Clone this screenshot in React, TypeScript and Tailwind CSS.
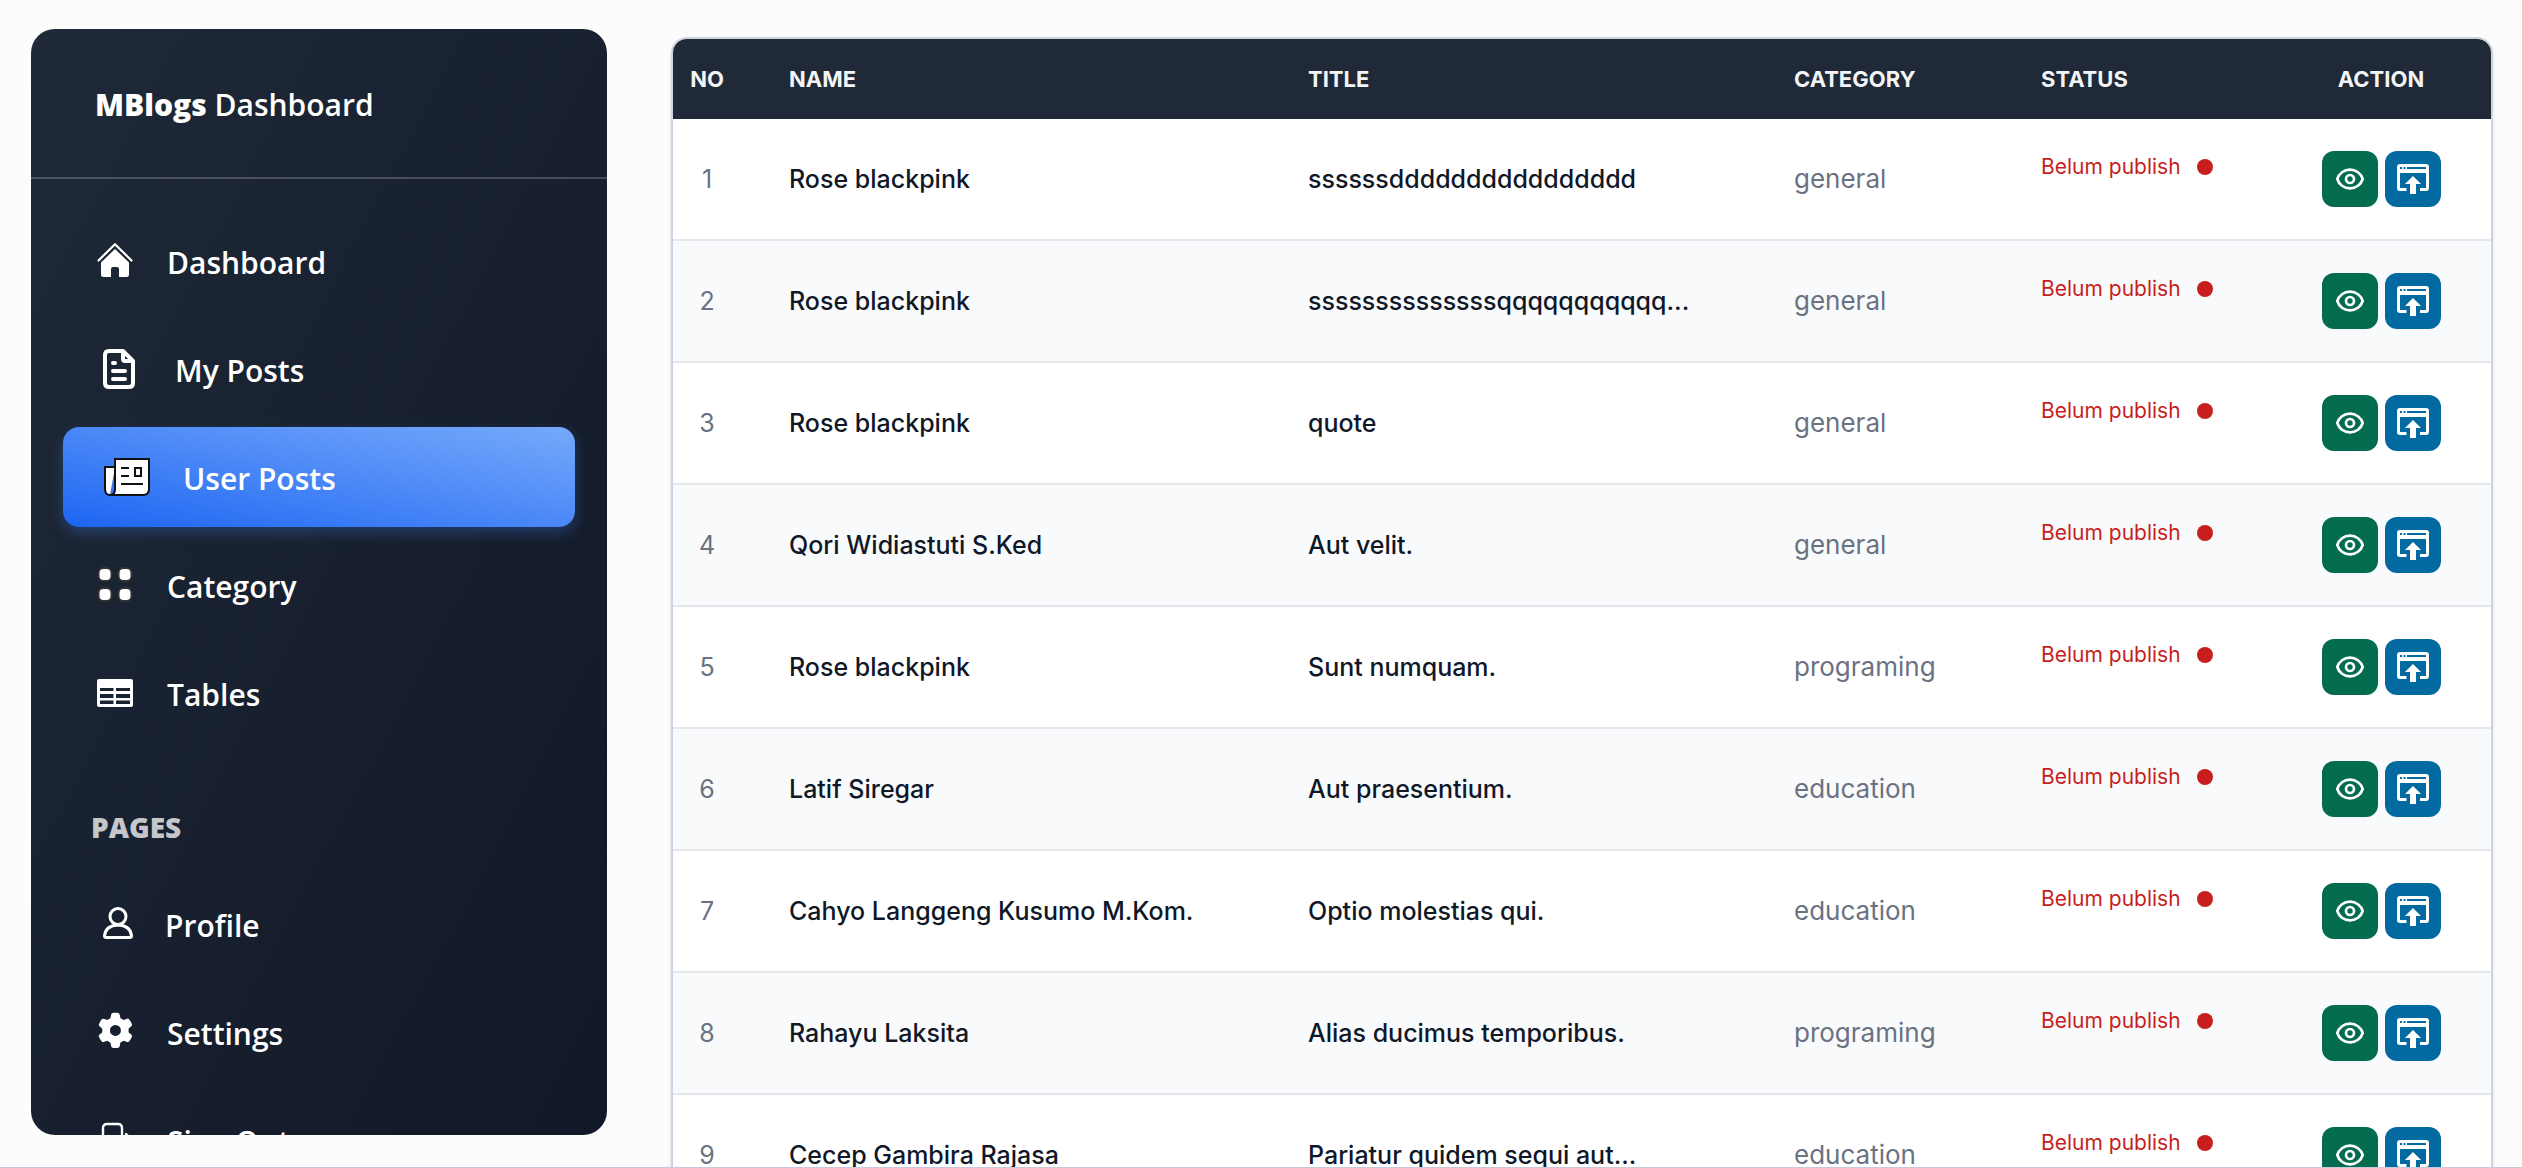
import type { ReactNode } from "react";

const strokeProps = {
  fill: "none",
  stroke: "currentColor",
  strokeLinecap: "round" as const,
  strokeLinejoin: "round" as const,
};

function HomeIcon() {
  return (
    <svg className="h-10 w-10 shrink-0" viewBox="0 0 40 40" fill="currentColor" aria-hidden="true">
      <path d="M3.500 19.500L20 3.200L36.500 19.500" {...strokeProps} strokeWidth="2.200" />
      <path d="M20 8L34 21.500V33.500Q34 36 31.500 36H24V28Q24 26 22 26H18Q16 26 16 28V36H8.500Q6 36 6 33.500V21.500Z" />
    </svg>
  );
}

function DocumentIcon() {
  return (
    <svg className="h-12 w-12 shrink-0" viewBox="0 0 48 48" {...strokeProps} aria-hidden="true">
      <path d="M28 6H14Q10 6 10 10V38Q10 42 14 42H34Q38 42 38 38V16L28 6V14Q28 16 30 16H38" strokeWidth="4" />
      <path d="M18 18H20M18 26H30M18 34H30" strokeWidth="4" />
    </svg>
  );
}

function NewsIcon() {
  return (
    <svg className="h-14 w-14 shrink-0" viewBox="0 0 56 56" fill="#fff" stroke="#111" strokeWidth="2" aria-hidden="true">
      <path d="M20 18H10V40Q10 46 15 46H48Q54 46 54 40V10H20V40Q20 46 15 46" />
      <path d="M26 19H34M26 27H34M26 35H48" fill="none" />
      <path d="M40 19H46V27H40Z" />
    </svg>
  );
}

function CategoryIcon() {
  return (
    <svg className="h-10 w-10 shrink-0" viewBox="0 0 40 40" fill="#fff" stroke="#333" strokeWidth="2" aria-hidden="true">
      <rect x="3.500" y="3" width="13" height="13" rx="5" />
      <rect x="23.500" y="3" width="13" height="13" rx="5" />
      <rect x="3.500" y="23" width="13" height="13" rx="5" />
      <rect x="23.500" y="23" width="13" height="13" rx="5" />
    </svg>
  );
}

function TableIcon() {
  return (
    <svg className="h-10 w-10 shrink-0" viewBox="0 0 40 40" fill="currentColor" fillRule="evenodd" aria-hidden="true">
      <path d="M4 6H36Q38 6 38 8V32Q38 34 36 34H4Q2 34 2 32V8Q2 6 4 6ZM5 15V18H18.500V15ZM21 15V18H35V15ZM5 21V25H18.500V21ZM21 21V25H35V21ZM5 27.500V31H18.500V27.500ZM21 27.500V31H35V27.500Z" />
    </svg>
  );
}

function ProfileIcon() {
  return (
    <svg className="h-10 w-[38px] shrink-0" viewBox="0 0 38 40" {...strokeProps} strokeWidth="3" aria-hidden="true">
      <circle cx="23" cy="12.500" r="8" />
      <path d="M11.500 33.500Q9.500 33.500 9.500 32Q10.500 21.500 23 21Q35.500 21.500 36.500 32Q36.500 33.500 34.500 33.500Z" />
    </svg>
  );
}

function GearIcon() {
  return (
    <svg className="h-10 w-10 shrink-0" viewBox="0 0 512 512" fill="currentColor" aria-hidden="true">
      <path
        transform="translate(36 10) scale(0.88)"
        d="M495.900 166.600c3.200 8.700.5 18.400-6.400 24.600l-43.300 39.400c1.100 8.300 1.700 16.800 1.700 25.400s-.6 17.100-1.700 25.400l43.300 39.400c6.900 6.200 9.600 15.900 6.400 24.600-4.400 11.900-9.700 23.300-15.800 34.300l-4.700 8.100c-6.600 11-14 21.400-22.100 31.200-5.900 7.200-15.700 9.600-24.500 6.800l-55.700-17.700c-13.400 10.300-28.200 18.900-44 25.400l-12.500 57.100c-2 9.100-9 16.300-18.200 17.800-13.800 2.300-28 3.500-42.500 3.500s-28.700-1.200-42.500-3.500c-9.200-1.500-16.200-8.700-18.200-17.800l-12.500-57.100c-15.800-6.500-30.600-15.100-44-25.400l-55.600 17.800c-8.800 2.800-18.600.3-24.500-6.800-8.100-9.800-15.500-20.200-22.100-31.200l-4.700-8.100c-6.100-11-11.400-22.400-15.800-34.300-3.200-8.700-.5-18.400 6.400-24.600l43.300-39.400C64.600 273.100 64 264.600 64 256s.6-17.100 1.700-25.400l-43.300-39.400c-6.900-6.200-9.600-15.900-6.400-24.600 4.400-11.900 9.700-23.300 15.800-34.300l4.700-8.100c6.600-11 14-21.400 22.100-31.200 5.900-7.200 15.700-9.600 24.500-6.800l55.700 17.700c13.400-10.300 28.200-18.900 44-25.400l12.500-57.100c2-9.100 9-16.300 18.200-17.800C227.300 1.200 241.500 0 256 0s28.700 1.200 42.500 3.500c9.200 1.500 16.200 8.700 18.200 17.800l12.500 57.100c15.800 6.500 30.600 15.100 44 25.400l55.700-17.700c8.800-2.800 18.600-.3 24.500 6.800 8.100 9.800 15.500 20.200 22.100 31.200l4.700 8.100c6.100 11 11.400 22.400 15.800 34.300zM256 336a80 80 0 1 0 0-160 80 80 0 1 0 0 160z"
      />
    </svg>
  );
}

function SignOutIcon() {
  return (
    <svg className="h-10 w-10 shrink-0" viewBox="0 0 40 40" {...strokeProps} strokeWidth="2.400" aria-hidden="true">
      <path d="M27 14V8Q27 4 23 4H12Q8 4 8 8V32Q8 36 12 36H23Q27 36 27 32V26M17 20H36M31 14L37 20L31 26" />
    </svg>
  );
}

function EyeIcon() {
  return (
    <svg className="h-8 w-8" viewBox="0 0 24 24" {...strokeProps} strokeWidth="2" aria-hidden="true">
      <path d="M15 12a3 3 0 11-6 0 3 3 0 016 0z" />
      <path d="M2.458 12C3.732 7.943 7.523 5 12 5c4.478 0 8.268 2.943 9.542 7-1.274 4.057-5.064 7-9.542 7-4.477 0-8.268-2.943-9.542-7z" />
    </svg>
  );
}

function PublishIcon() {
  return (
    <svg className="h-8 w-8" viewBox="0 0 32 32" fill="currentColor" fillRule="evenodd" aria-hidden="true">
      <path d="M3 1H29Q32 1 32 4V25Q32 28 29 28H23V25H29V10H3V25H9.500V28H3Q0 28 0 25V4Q0 1 3 1ZM3 4V6H5V4ZM6.500 4V6H8.500V4ZM10 4V6H29V4Z" />
      <path d="M16 13L24 21H19V31H13V21H8Z" />
    </svg>
  );
}

type NavItem = { label: string; icon: ReactNode; active?: boolean };

const mainItems: NavItem[] = [
  { label: "Dashboard", icon: <HomeIcon /> },
  { label: "My Posts", icon: <DocumentIcon /> },
  { label: "User Posts", icon: <NewsIcon />, active: true },
  { label: "Category", icon: <CategoryIcon /> },
  { label: "Tables", icon: <TableIcon /> },
];

const pageItems: NavItem[] = [
  { label: "Profile", icon: <ProfileIcon /> },
  { label: "Settings", icon: <GearIcon /> },
  { label: "Sign Out", icon: <SignOutIcon /> },
];

function NavList({ items }: { items: NavItem[] }) {
  return (
    <ul className="flex flex-col gap-2">
      {items.map((item) => (
        <li key={item.label}>
          <a
            href="#"
            aria-current={item.active ? "page" : undefined}
            className={
              "flex h-[100px] items-center gap-8 rounded-2xl px-8 text-[30px] leading-[48px] font-semibold text-white " +
              (item.active
                ? "bg-linear-to-tr from-[#1c64f2] to-[#76a9fa] shadow-[0_6px_14px_rgba(59,130,246,0.3)]"
                : "")
            }
          >
            {item.icon}
            <span className="pt-1">{item.label}</span>
          </a>
        </li>
      ))}
    </ul>
  );
}

const posts = [
  { name: "Rose blackpink", title: "ssssssdddddddddddddddd", category: "general" },
  { name: "Rose blackpink", title: "ssssssssssssssqqqqqqqqqqq...", category: "general" },
  { name: "Rose blackpink", title: "quote", category: "general" },
  { name: "Qori Widiastuti S.Ked", title: "Aut velit.", category: "general" },
  { name: "Rose blackpink", title: "Sunt numquam.", category: "programing" },
  { name: "Latif Siregar", title: "Aut praesentium.", category: "education" },
  { name: "Cahyo Langgeng Kusumo M.Kom.", title: "Optio molestias qui.", category: "education" },
  { name: "Rahayu Laksita", title: "Alias ducimus temporibus.", category: "programing" },
  { name: "Cecep Gambira Rajasa", title: "Pariatur quidem sequi aut...", category: "education" },
];

function PostsTable() {
  return (
    <div className="overflow-hidden rounded-t-2xl border-2 border-b-0 border-[#cbd5e1] bg-white shadow-md">
      <table className="w-full table-fixed border-separate border-spacing-0 text-left">
        <colgroup>
          <col className="w-[68px]" />
          <col className="w-[519px]" />
          <col className="w-[486px]" />
          <col className="w-[247px]" />
          <col className="w-[278px]" />
          <col className="w-[220px]" />
        </colgroup>
        <thead className="bg-[#1f2937] text-[22px] leading-8 font-bold text-gray-100 uppercase">
          <tr className="h-20">
            <th scope="col" className="text-center">No</th>
            <th scope="col" className="px-12">Name</th>
            <th scope="col" className="px-12">Title</th>
            <th scope="col" className="px-12">Category</th>
            <th scope="col" className="px-12">Status</th>
            <th scope="col" className="text-center">Action</th>
          </tr>
        </thead>
        <tbody className="text-[25px] leading-10 whitespace-nowrap [&_td]:border-b-2 [&_td]:border-gray-200">
          {posts.map((post, i) => (
            <tr key={i} className="h-[122px] odd:bg-white even:bg-gray-50">
              <td className="text-center text-gray-500">{i + 1}</td>
              <td className="px-12 font-medium text-gray-900">{post.name}</td>
              <td className="px-12 font-medium text-gray-900">{post.title}</td>
              <td className="px-12 text-[26px] text-gray-500">{post.category}</td>
              <td className="px-12">
                <div className="mb-6 flex items-center gap-4 text-[21px] leading-8 text-[#c81e1e]">
                  Belum publish
                  <span className="size-4 rounded-full bg-[#c81e1e]" />
                </div>
              </td>
              <td>
                <div className="flex justify-center gap-[7px] text-white">
                  <button type="button" aria-label="View post" className="flex size-14 items-center justify-center rounded-xl bg-[#046c4e]">
                    <EyeIcon />
                  </button>
                  <button type="button" aria-label="Publish post" className="flex size-14 items-center justify-center rounded-xl bg-[#0369a1]">
                    <PublishIcon />
                  </button>
                </div>
              </td>
            </tr>
          ))}
        </tbody>
      </table>
    </div>
  );
}

export default function App() {
  return (
    <div className="flex h-screen gap-16 overflow-hidden border-b border-[#c9c9dc] bg-[#fcfcfc] pr-[29px] pl-[31px]">
      <aside className="mt-[29px] mb-8 w-[576px] shrink-0 overflow-hidden rounded-3xl bg-linear-to-br from-[#1f2937] to-[#111827] font-['Open_Sans',sans-serif] text-white">
        <div className="flex h-[150px] items-center border-b-2 border-white/20 px-16 pt-1 text-[30px] leading-[48px]">
          <p className="font-semibold">
            <b className="font-extrabold">MBlogs</b> Dashboard
          </p>
        </div>
        <nav className="px-8 pt-8">
          <NavList items={mainItems} />
          <h2 className="mt-16 mb-[27px] px-7 text-[28px] leading-10 font-extrabold text-white/75 uppercase">Pages</h2>
          <NavList items={pageItems} />
        </nav>
      </aside>
      <main className="min-w-0 flex-1 pt-[37px] font-[Inter,sans-serif]">
        <PostsTable />
      </main>
    </div>
  );
}
